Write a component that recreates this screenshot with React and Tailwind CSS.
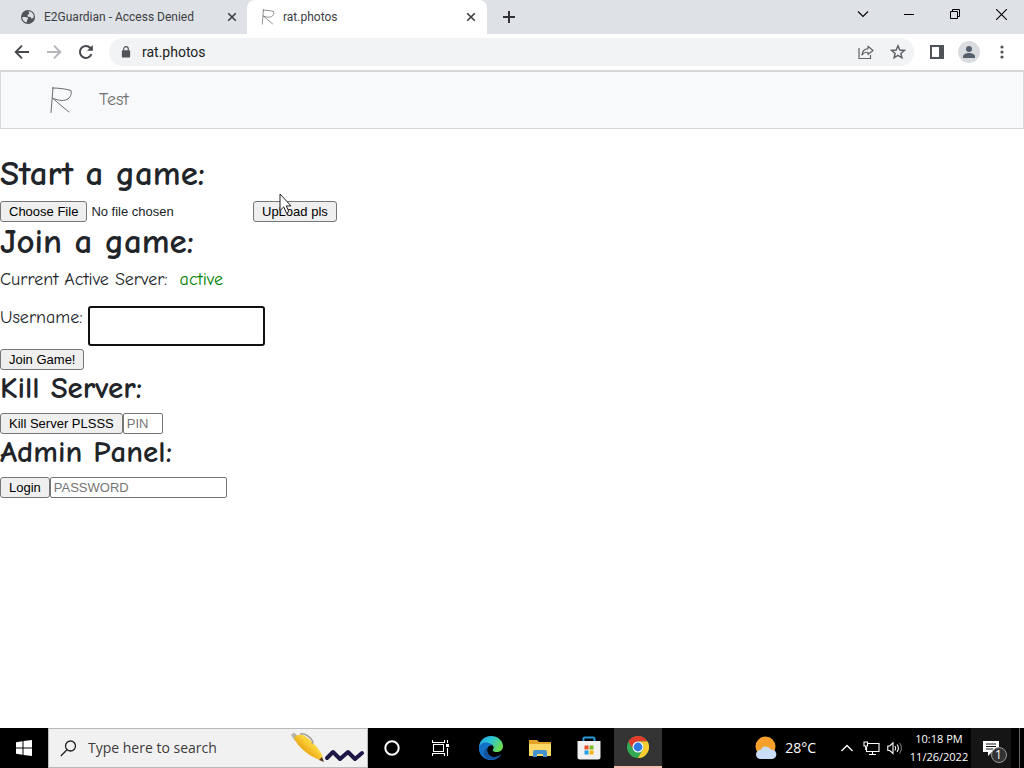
import { useState } from 'react'
import clsx from 'clsx'

const gameButton =
  'h-[21px] shrink-0 rounded-[3px] border border-[#767676] bg-[#efefef] px-2 text-[13px] leading-4 text-black hover:bg-[#e5e5e5]'
const gameInput =
  'h-[21px] rounded-[2px] border border-[#767676] bg-white px-[3px] text-[13px] leading-4 text-black placeholder:text-[#757575]'

function RatLogo({ className }) {
  return (
    <svg viewBox="0 0 24 28" className={className} fill="none" stroke="currentColor" strokeLinecap="round" strokeLinejoin="round">
      <path d="M4 1.500 2 26.500M3.600 2 C10 2 17 3 22 4.500 C23 8 21 12 18 13.500 C13 15.500 8 14 3.500 12 C9 17 15 22 20 26" />
    </svg>
  )
}

function CloseIcon({ className }) {
  return (
    <svg viewBox="0 0 10 10" className={className} fill="none" stroke="currentColor" strokeWidth="1.600">
      <path d="M1.200 1.200 8.800 8.800M8.800 1.200 1.200 8.800" />
    </svg>
  )
}

function GlobeIcon() {
  return (
    <svg viewBox="0 0 16 16" className="size-4 shrink-0">
      <circle cx="8" cy="8" r="7" fill="#505458" />
      <path d="M2.300 8c2.500-.2 4.700-.2 5.500.7 1 1.200-1 1.800-.7 2.700l-.5 2C4 13 2.200 11 2.300 8z" fill="#dee1e6" />
      <path d="M8.500 2.200c2.400.1 4.200 1.500 5 3.600l.2 2.700-2 1.200-1.200-1.700-2.600-.3L7.500 6l1.800-1.300z" fill="#dee1e6" />
    </svg>
  )
}

function TabStrip() {
  return (
    <div className="flex h-[34px] bg-[#dee1e6] font-['Roboto',sans-serif] text-[#3c4043]">
      <div className="flex w-[247px] items-center pr-[9px] pl-5">
        <GlobeIcon />
        <span className="ml-2 flex-1 text-[12px] leading-4 whitespace-nowrap">E2Guardian - Access Denied</span>
        <button aria-label="Close E2Guardian tab" className="p-px">
          <CloseIcon className="size-[10px]" />
        </button>
      </div>
      <div className="flex w-[240px] items-center rounded-t-lg bg-white pr-[10px] pl-[14px]">
        <RatLogo className="h-4 w-[14px] text-[#444]" />
        <span className="ml-2 flex-1 text-[12px] leading-4">rat.photos</span>
        <button aria-label="Close rat.photos tab" className="p-px">
          <CloseIcon className="size-[10px]" />
        </button>
      </div>
      <button aria-label="New tab" className="ml-[15px]">
        <svg viewBox="0 0 14 14" className="size-[14px]" stroke="#303236" strokeWidth="2">
          <path d="M7 1v12M1 7h12" />
        </svg>
      </button>
      <div className="mb-[6px] ml-auto flex items-center text-black">
        <button aria-label="Search tabs" className="flex w-[46px] justify-center">
          <svg viewBox="0 0 12 8" className="h-2 w-3" fill="none" stroke="currentColor" strokeWidth="1.100">
            <path d="M1 1.500 6 6.500 11 1.500" />
          </svg>
        </button>
        <button aria-label="Minimize" className="flex w-[46px] justify-center">
          <span className="h-px w-[10px] bg-black" />
        </button>
        <button aria-label="Restore" className="flex w-[46px] justify-center">
          <svg viewBox="0 0 10 10" className="size-[10px]" fill="none" stroke="currentColor">
            <path d="M.5 2.500h7v7h-7zM2.500 2.500v-2h7v7h-2" />
          </svg>
        </button>
        <button aria-label="Close window" className="flex w-[46px] justify-center">
          <svg viewBox="0 0 10 10" className="size-[11px]" stroke="currentColor">
            <path d="M0 0 10 10M10 0 0 10" />
          </svg>
        </button>
      </div>
    </div>
  )
}

function Toolbar() {
  return (
    <div className="flex h-9 items-center bg-white pr-5 pl-[14px] text-[#5f6368]">
      <button aria-label="Back" className="mr-4">
        <svg viewBox="0 0 16 16" className="size-4" fill="none" stroke="#46494d" strokeWidth="1.900">
          <path d="M15 8H2M8 1.700 1.700 8 8 14.300" />
        </svg>
      </button>
      <button aria-label="Forward" className="mr-4">
        <svg viewBox="0 0 16 16" className="size-4" fill="none" stroke="#b4b6b9" strokeWidth="1.900">
          <path d="M1 8h13M8 1.700 14.300 8 8 14.300" />
        </svg>
      </button>
      <button aria-label="Reload" className="mr-[15px]">
        <svg viewBox="0 0 16 16" className="size-4" fill="none" stroke="#46494d" strokeWidth="2">
          <path d="M13.500 10.200A6 6 0 1 1 12.300 3.800L14 5.600" />
          <path d="M14.800 1v5.800H9z" fill="#46494d" stroke="none" />
        </svg>
      </button>
      <div className="flex h-7 flex-1 items-center rounded-full bg-[#f1f3f4] pr-2 pl-3">
        <svg viewBox="0 0 10 13" className="h-3 w-[10px]">
          <rect x="0.500" y="4.500" width="9" height="8" rx="1" fill="#505458" />
          <path d="M2.500 5V3.200a2.500 2.500 0 0 1 5 0V5" fill="none" stroke="#505458" strokeWidth="1.300" />
        </svg>
        <input
          aria-label="Address"
          defaultValue="rat.photos"
          className="ml-[11px] min-w-0 flex-1 bg-transparent font-['Roboto',sans-serif] text-[14px] leading-5 text-[#202124] outline-none"
        />
        <button aria-label="Share this page" className="mr-4">
          <svg viewBox="0 0 16 16" className="size-4" fill="none" stroke="currentColor" strokeWidth="1.200">
            <path d="M1 4v10.500h11.500V11" />
            <path d="M10 2.200 15 6.500 10 10.500V8.300C7.500 8 5.500 8.800 4 11 4.300 7.300 6.300 5 10 4.600z" strokeLinejoin="round" />
          </svg>
        </button>
        <button aria-label="Bookmark this tab">
          <svg viewBox="0 0 16 16" className="size-4" fill="none" stroke="currentColor" strokeWidth="1.500">
            <path d="M8 1.800 9.800 6l4.500.4-3.400 3 1 4.400L8 11.400l-3.900 2.400 1-4.400-3.400-3L6.200 6z" />
          </svg>
        </button>
      </div>
      <button aria-label="Side panel" className="ml-4">
        <svg viewBox="0 0 14 14" className="size-[14px]" fill="none" stroke="#505458" strokeWidth="2">
          <path d="M1 1h12v12H1z" />
          <path d="M9 1h4v12H9z" fill="#505458" stroke="none" />
        </svg>
      </button>
      <button aria-label="Profile" className="ml-[14px]">
        <svg viewBox="0 0 22 22" className="size-[22px]">
          <circle cx="11" cy="11" r="11" fill="#dadce0" />
          <circle cx="11" cy="8" r="3" fill="#56606c" />
          <path d="M5 17v-1.500c0-2.200 3-3.500 6-3.500s6 1.300 6 3.500V17z" fill="#56606c" />
        </svg>
      </button>
      <button aria-label="Menu" className="ml-5">
        <svg viewBox="0 0 4 14" className="h-[14px] w-1" fill="#505458">
          <circle cx="2" cy="2" r="1.600" />
          <circle cx="2" cy="7" r="1.600" />
          <circle cx="2" cy="12" r="1.600" />
        </svg>
      </button>
    </div>
  )
}

function Navbar() {
  return (
    <nav className="flex h-[59px] items-center border-x border-t-2 border-b border-[#d5d7d9] bg-[#f8f9fa] pl-12 font-['Comic_Sans_MS','Comic_Neue','Noto_Sans',sans-serif]">
      <a href="#home" aria-label="Home">
        <RatLogo className="h-7 w-6 text-[#6c6c6c]" />
      </a>
      <a href="#test" className="ml-[26px] text-[18px] leading-6 text-[#6f7071]">
        Test
      </a>
    </nav>
  )
}

function Heading({ small, children }) {
  return (
    <h1
      className={clsx(
        "mb-2 font-['Comic_Sans_MS','Comic_Neue','Noto_Sans',sans-serif] font-bold",
        small ? 'mt-px text-[31px] leading-[34px]' : 'text-[35px] leading-[38px]'
      )}
    >
      {children}
    </h1>
  )
}

function GamePage() {
  const [username, setUsername] = useState('')

  return (
    <main className="flex-1 bg-white pt-[26px] pb-8 font-['Liberation_Sans',Arial,sans-serif] text-[#212529]">
      <Heading>Start a game:</Heading>
      <form className="relative mb-px flex w-fit" onSubmit={e => e.preventDefault()}>
        <input
          type="file"
          aria-label="Game file"
          className="h-[21px] w-[253px] text-[13px] leading-4 file:mr-1 file:h-[21px] file:rounded-[3px] file:border file:border-solid file:border-[#767676] file:bg-[#efefef] file:px-2 file:text-[13px] file:leading-4 file:text-black"
        />
        <button className={gameButton}>UpLoad pls</button>
        {/* mouse pointer */}
        <svg viewBox="0 0 13 21" className="pointer-events-none absolute -top-2 left-[279px] h-[21px] w-[13px]">
          <path d="M1 1v16.500l3.800-3.600 2.600 6 2.500-1.100-2.600-5.900H12z" fill="#fff" stroke="#222" />
        </svg>
      </form>

      <Heading>Join a game:</Heading>
      <form onSubmit={e => e.preventDefault()}>
        <p className="mb-[15px] font-['Comic_Sans_MS','Comic_Neue','Noto_Sans',sans-serif] text-[18px] leading-[22px]">
          Current Active Server:<span className="ml-3 text-[#008000]">active</span>
        </p>
        <div className="flex items-start">
          <label
            htmlFor="username"
            className="w-[88px] font-['Comic_Sans_MS','Comic_Neue','Noto_Sans',sans-serif] text-[18px] leading-6"
          >
            Username:
          </label>
          <input
            id="username"
            value={username}
            onChange={e => setUsername(e.target.value)}
            className="h-10 w-[177px] rounded-[3px] border-2 border-[#101010] px-1 text-[13px] outline-none"
          />
        </div>
        <button className={clsx(gameButton, 'mt-[3px] block')}>Join Game!</button>
      </form>

      <Heading small>Kill Server:</Heading>
      <form className="mb-px flex" onSubmit={e => e.preventDefault()}>
        <button className={gameButton}>Kill Server PLSSS</button>
        <input aria-label="PIN" placeholder="PIN" className={clsx(gameInput, 'w-10')} />
      </form>

      <Heading small>Admin Panel:</Heading>
      <form className="flex" onSubmit={e => e.preventDefault()}>
        <button className={gameButton}>Login</button>
        <input aria-label="Password" type="password" placeholder="PASSWORD" className={clsx(gameInput, 'w-[177px]')} />
      </form>
    </main>
  )
}

function PenDoodle() {
  return (
    <svg viewBox="0 0 78 38" className="h-[38px] w-[78px] shrink-0">
      <defs>
        <linearGradient id="pen" x1="0" y1="1" x2="1" y2="0">
          <stop offset="0.300" stopColor="#e59a06" />
          <stop offset="0.600" stopColor="#fbd23a" />
        </linearGradient>
      </defs>
      <path d="M2 6 5 3.500l5 4.500-4 4z" fill="#b9b3a6" />
      <path d="M5 9c2-3 5-4 9-3 8 5 15 12 19 20l1 6-6-2C18 25 9 18 5 9z" fill="url(#pen)" />
      <path d="M11 5c5-1 11 3 13 8l-1 2" fill="none" stroke="#a8a295" strokeWidth="1.500" />
      <path d="m30 31 3-3 2 5z" fill="#583424" />
      <path d="M38 29l6-6 7 7 8-7 7 7 7-6" fill="none" stroke="#1d1746" strokeWidth="4" strokeLinejoin="round" strokeLinecap="round" />
    </svg>
  )
}

function EdgeIcon() {
  return (
    <svg viewBox="0 0 24 24" className="size-6">
      <defs>
        <linearGradient id="edgeTop" x1="0" y1="0" x2="1" y2="0.500">
          <stop offset="0" stopColor="#1fa5e8" />
          <stop offset="0.500" stopColor="#2cc5d4" />
          <stop offset="1" stopColor="#69dc4e" />
        </linearGradient>
      </defs>
      <path d="M0 12C0 5 5 0 12 0s12 5 12 10c0 4-3 6-6.500 6-3 0-4.500-1.300-3.500-2.500 1.500-2 .5-5-2.500-5C6 8.500 3 12 4 17 1 15 0 13.500 0 12z" fill="url(#edgeTop)" />
      <path d="M0 12c.5-4.500 5-6 8-5.500 3 .3 5 2 5.300 3.500C11 8.500 8 11 8 14.500c0 4 4 7 8 6.500 3-.3 4.500-1.500 6-3C20 22 16 24 12 24 5 24-.5 18.500 0 12z" fill="#1471c5" />
      <path d="M8.500 11C7 17 11 22 17 21c2.500-.3 4-1.600 5-3-2 5-9 7.500-14 4.500C3.500 19.500 4 13.500 8.500 11z" fill="#12549f" />
    </svg>
  )
}

function FolderIcon() {
  return (
    <svg viewBox="0 0 22 19" className="h-[19px] w-[22px]">
      <path d="M0 1h8l2 2h12v14H0z" fill="#e3a32b" />
      <path d="M0 5h22v12H0z" fill="#fbd868" />
      <path d="M4 18v-5q0-2 2-2h10q2 0 2 2v5h-4v-3H8v3z" fill="#4592cf" />
    </svg>
  )
}

function StoreIcon() {
  return (
    <svg viewBox="0 0 24 24" className="size-6">
      <path d="M6.500 6V2.500q0-1 1-1h9q1 0 1 1V6" fill="none" stroke="#2b98d8" strokeWidth="2" />
      <path d="M.5 5h23v16q0 2.500-2.500 2.500H3Q.5 23.500.5 21z" fill="#f1f1f1" />
      <path d="M7.500 9.500h4v4h-4z" fill="#e5502a" />
      <path d="M12.500 9.500h4v4h-4z" fill="#83b81a" />
      <path d="M7.500 14.500h4v4h-4z" fill="#1c9fe3" />
      <path d="M12.500 14.500h4v4h-4z" fill="#f6b50e" />
    </svg>
  )
}

function ChromeIcon() {
  return (
    <svg viewBox="0 0 24 24" className="size-[22px]">
      <circle cx="12" cy="12" r="12" fill="#34a853" />
      <path d="M1.600 6A12 12 0 0 1 22.400 6H12a6 6 0 0 0-5.200 9z" fill="#e33b2e" />
      <path d="M22.400 6A12 12 0 0 1 12 24l5.200-9A6 6 0 0 0 12 6z" fill="#fccb32" />
      <circle cx="12" cy="12" r="6" fill="#fff" />
      <circle cx="12" cy="12" r="4.800" fill="#2f7ae5" />
    </svg>
  )
}

function TaskbarButton({ label, active, children }) {
  return (
    <button
      aria-label={label}
      className={clsx('flex h-10 w-12 items-center justify-center', active && 'border-b-2 border-[#f3bdb0] bg-[#333]')}
    >
      {children}
    </button>
  )
}

function Taskbar() {
  return (
    <footer className="flex h-10 bg-black text-white">
      <TaskbarButton label="Start">
        <svg viewBox="0 0 16 16" className="size-4" fill="#fff">
          <path d="M0 2.200 6.500 1.300v6.200H0zM7.500 1.100 16 0v7.500H7.500zM0 8.500h6.500v6.200L0 13.800zM7.500 8.500H16V16l-8.500-1.100z" />
        </svg>
      </TaskbarButton>
      <div className="flex w-80 items-center border border-[#b9b9b9] bg-[#f1f1f1] pl-[11px]">
        <svg viewBox="0 0 17 17" className="size-[17px] shrink-0" fill="none" stroke="#222" strokeWidth="1.300">
          <circle cx="10.500" cy="6" r="5" />
          <path d="M7 9.700.800 16" />
        </svg>
        <input
          aria-label="Search"
          placeholder="Type here to search"
          className="ml-[11px] min-w-0 flex-1 bg-transparent text-[14px] leading-5 text-black outline-none placeholder:text-[#3b3b3b]"
        />
        <PenDoodle />
      </div>
      <TaskbarButton label="Cortana">
        <svg viewBox="0 0 16 16" className="size-4" fill="none" stroke="#fff" strokeWidth="2">
          <circle cx="8" cy="8" r="6.700" />
        </svg>
      </TaskbarButton>
      <TaskbarButton label="Task view">
        <svg viewBox="0 0 17 16" className="h-4 w-[17px]" fill="none" stroke="#fff" strokeWidth="1.100">
          <path d="M1.500 4.500h10v7h-10zM.5 0v2.500h12V0M.5 16v-2.500h12V16M15.500 0v3M15.500 8v8" />
          <path d="M14 4h3v3h-3z" fill="#fff" stroke="none" />
        </svg>
      </TaskbarButton>
      <div className="ml-[3px] flex gap-px">
        <TaskbarButton label="Edge">
          <EdgeIcon />
        </TaskbarButton>
        <TaskbarButton label="File Explorer">
          <FolderIcon />
        </TaskbarButton>
        <TaskbarButton label="Store">
          <StoreIcon />
        </TaskbarButton>
        <TaskbarButton label="Chrome" active>
          <ChromeIcon />
        </TaskbarButton>
      </div>

      <div className="ml-auto flex items-center">
        <svg viewBox="0 0 24 24" className="size-6">
          <circle cx="11.500" cy="10.500" r="10" fill="#f6a02c" />
          <path d="M6.500 23a4.500 4.500 0 0 1 0-9 5.500 5.500 0 0 1 10-.5 4.800 4.800 0 0 1 2 9.500z" fill="#c9ddf6" />
        </svg>
        <span className="ml-[7px] text-[14px] leading-5">28°C</span>
        <button aria-label="Show hidden icons" className="ml-[25px]">
          <svg viewBox="0 0 12 8" className="h-2 w-3" fill="none" stroke="#fff" strokeWidth="1.300">
            <path d="M.5 7 6 1.500 11.500 7" />
          </svg>
        </button>
        <svg viewBox="0 0 17 15" className="ml-[10px] h-[15px] w-[17px]" fill="none" stroke="#fff" strokeWidth="1.100">
          <path d="M5 2.500h11v8H3.500V6M9.500 10.500v3M6 13.500h7" />
          <path d="M1 1h3.500v4H1zM2.700 5v4" />
        </svg>
        <svg viewBox="0 0 16 14" className="ml-[7px] h-[14px] w-4" fill="none" stroke="#fff" strokeWidth="1.100">
          <path d="M.800 5v4.500h2L6 12.500V1.800L2.800 5zM8 5q1.500 2 0 4.500M10 3.500q2.800 3.500 0 7.300" />
          <path d="M12.500 2q3.800 5.200 0 10.500" stroke="#777" />
        </svg>
        <div className="ml-1 w-16 text-center text-[11px] leading-[18px] whitespace-nowrap">
          <div>10:18 PM</div>
          <div>11/26/2022</div>
        </div>
        <button aria-label="Notifications" className="flex h-10 w-10 items-center justify-center bg-[#151515]">
          <span className="relative">
            <svg viewBox="0 0 17 17" className="size-[17px]">
              <path d="M0 1h16v11H9l-4 4v-4H0z" fill="#fff" />
              <path d="M3 4h10M3 6.500h10M3 9h7" stroke="#151515" />
            </svg>
            <span className="absolute top-[7px] left-2 flex size-4 items-center justify-center rounded-full border border-[#999] bg-[#333] text-[12px] leading-3">
              1
            </span>
          </span>
        </button>
        <div className="mr-1 ml-2 h-10 w-px bg-[#666]" />
      </div>
    </footer>
  )
}

export default function App() {
  return (
    <div className="flex min-h-screen flex-col font-['Segoe_UI','Open_Sans',sans-serif]">
      <TabStrip />
      <Toolbar />
      <Navbar />
      <GamePage />
      <Taskbar />
    </div>
  )
}
